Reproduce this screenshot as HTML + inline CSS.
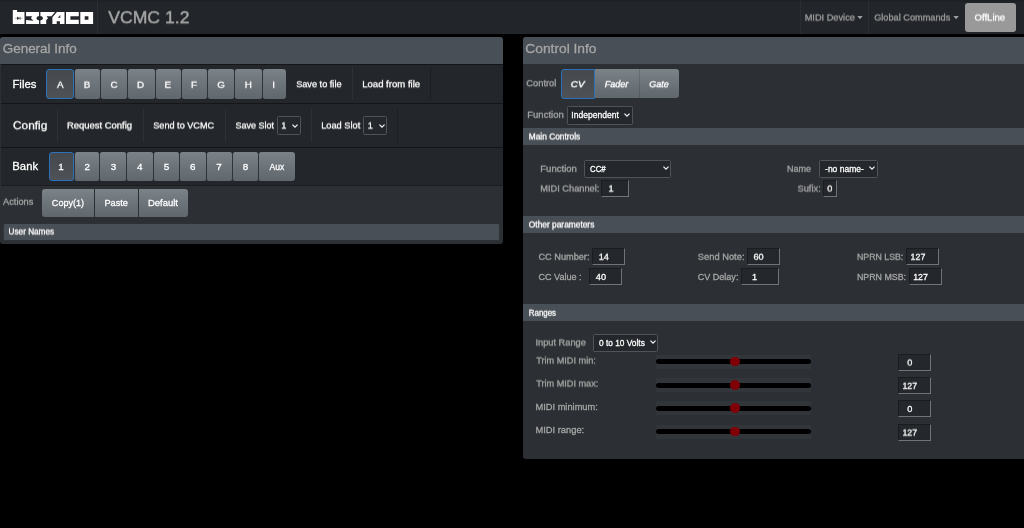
<!DOCTYPE html>
<html lang="en"><head><meta charset="utf-8"><title>VCMC 1.2</title>
<style>
html,body{margin:0;padding:0;background:#000;}
body{width:1024px;height:528px;overflow:hidden;position:relative;font-family:"Liberation Sans",sans-serif;}
.b{position:absolute;box-sizing:border-box;}
.tx{position:absolute;left:0;top:0;width:1024px;height:528px;will-change:transform;z-index:5;transform-origin:0 0;}
.t{position:absolute;-webkit-text-stroke:.28px;white-space:pre;line-height:1;transform-origin:0 0;font-family:"Liberation Sans",sans-serif;}

.btn{position:absolute;box-sizing:border-box;background:linear-gradient(#7b8288,#6b7278 55%,#60676d);border-radius:2.2px;}
.btn.first{border-radius:3px 2.2px 2.2px 3px;}
.btn.last{border-radius:2.2px 3px 3px 2.2px;}
.btn.act{background:linear-gradient(#45494e,#4a4e53 55%,#4e5257);border:1px solid #2c72b8;border-radius:3px;}
.sel{position:absolute;box-sizing:border-box;background:#24272b;border:1px solid #505357;border-radius:1.5px;}
.inp{position:absolute;box-sizing:border-box;background:#24272b;border:1px solid;border-color:#1a1c1f #70747a #70747a #1a1c1f;}
.bar{position:absolute;box-sizing:border-box;background:#484f56;}
.row{position:absolute;box-sizing:border-box;background:#23262a;border-top:1px solid #141619;}
.vs{position:absolute;width:1px;background:#2d3035;}
.vs.dk{background:#1c1e22;}
.trk{position:absolute;box-sizing:border-box;background:#32363a;}
.trk i{position:absolute;left:0;right:0;top:4.6px;height:5px;border-radius:2.5px;background:#000;}
.trk b{position:absolute;width:9.6px;height:9.6px;border-radius:50%;background:#800008;top:2.3px;left:74px;}
</style></head>
<body>
<div class="b " style="left:-8px;top:-8px;width:1040px;height:9px;background:#1c1f22;"></div>
<div class="b " style="left:-8px;top:0px;width:1040px;height:34px;background:linear-gradient(#1c1f22,#222529 3px,#222529);"></div>
<div class="b " style="left:97px;top:0px;width:1px;height:34px;background:#2a2d32;"></div>
<div class="b " style="left:800px;top:0px;width:1px;height:34px;background:#2a2d32;"></div>
<div class="b " style="left:868px;top:0px;width:1px;height:34px;background:#2a2d32;"></div>
<svg class="b" style="left:0;top:0;" width="100" height="34" viewBox="0 0 100 34"><g fill="#fff"><path d="M12.8 9.9H17.1V12H24.5V24H12.8Z"/><path d="M26.05 11.9H39.05V24H26.05V20.1L33.55 20.7L30.9 18.2L32.2 16.15H26.05Z"/><path d="M40.4 11.9H55L51.5 16.2H46.5L48 18.2L46.2 20.3V24H40.4Z"/><path fill-rule="evenodd" d="M56.9 11.9H64.5V24H59.9V21.3H56.7V24H52.4V17.3ZM60.3 15V17.8H57.8Z"/><path d="M66 11.9H78.8V16.3H70.4V19.8H78.8V24H66Z"/><path fill-rule="evenodd" d="M80.3 11.9H93.1V24H80.3ZM84.7 16.3H88.4V19.8H84.7Z"/></g><ellipse cx="39.7" cy="18.2" rx="3.1" ry="2.1" fill="#222529"/><g stroke="#777" stroke-width=".55" fill="#333"><path d="M14.9 18.3H22.5" fill="none"/><path d="M17 16.6V20L19.7 18.3Z" stroke="none"/><path d="M20.1 16.6V20" fill="none" stroke="#444" stroke-width=".7"/></g></svg>

<svg class="b" style="left:855px;top:14px" width="10" height="8" viewBox="855 14 10 8"><path d="M857.3 16.1H862.7L860 19.2Z" fill="#9e9e9e"/></svg>
<svg class="b" style="left:951px;top:14px" width="10" height="8" viewBox="951 14 10 8"><path d="M953.4 16.1H958.8L956.1 19.2Z" fill="#9e9e9e"/></svg>
<div class="b " style="left:965px;top:3px;width:50.5px;height:28.5px;background:#999;border-radius:3px;"></div>
<div class="b " style="left:0px;top:37px;width:503.1px;height:207px;background:#2c3034;border-radius:3px;"></div>
<div class="b " style="left:0px;top:37px;width:503.1px;height:27px;background:#484f56;border-radius:3px 3px 0 0;"></div>
<div class="b row" style="left:1px;top:64px;width:502.1px;height:39px;"></div>
<div class="b row" style="left:1px;top:103px;width:502.1px;height:44px;"></div>
<div class="b row" style="left:1px;top:147px;width:502.1px;height:38.3px;"></div>
<div class="b " style="left:1px;top:185.2px;width:502.1px;height:0.7px;background:#1b1d21;"></div>
<div class="b " style="left:60px;top:69.8px;width:220px;height:28.4px;background:#30343a;"></div>
<div class="btn act" style="left:46.4px;top:69px;width:27.6px;height:29.8px;"></div>
<div class="btn" style="left:75px;top:69.2px;width:25.0px;height:29.5px;"></div>
<div class="btn" style="left:101px;top:69.2px;width:26.0px;height:29.5px;"></div>
<div class="btn" style="left:128px;top:69.2px;width:27.0px;height:29.5px;"></div>
<div class="btn" style="left:156px;top:69.2px;width:25.0px;height:29.5px;"></div>
<div class="btn" style="left:182px;top:69.2px;width:25.0px;height:29.5px;"></div>
<div class="btn" style="left:208px;top:69.2px;width:26.0px;height:29.5px;"></div>
<div class="btn" style="left:235px;top:69.2px;width:27.0px;height:29.5px;"></div>
<div class="btn last" style="left:263px;top:69.2px;width:22.5px;height:29.5px;"></div>
<div class="b vs" style="left:352px;top:67.3px;width:1px;height:32.7px;"></div>
<div class="b vs dk" style="left:429.8px;top:67.3px;width:1px;height:32.7px;"></div>
<div class="b vs" style="left:57px;top:109px;width:1px;height:33px;"></div>
<div class="b vs" style="left:142.8px;top:109px;width:1px;height:33px;"></div>
<div class="b vs" style="left:225px;top:109px;width:1px;height:33px;"></div>
<div class="b vs" style="left:311px;top:109px;width:1px;height:33px;"></div>
<div class="b vs dk" style="left:397px;top:109px;width:1px;height:33px;"></div>
<div class="sel" style="left:277px;top:116px;width:24px;height:18.5px;"></div>
<svg class="b" style="z-index:2;left:291.20px;top:122.60px" width="8" height="6" viewBox="-4 -3 8 6"><path d="M-2.55 -1.35L0 1.2L2.55 -1.35" fill="none" stroke="#f4f4f4" stroke-width="1.25"/></svg>
<svg class="b" style="z-index:2;left:377.60px;top:122.60px" width="8" height="6" viewBox="-4 -3 8 6"><path d="M-2.55 -1.35L0 1.2L2.55 -1.35" fill="none" stroke="#f4f4f4" stroke-width="1.25"/></svg>
<div class="sel" style="left:363px;top:116px;width:24.1px;height:18.5px;"></div>
<div class="b " style="left:60px;top:152.7px;width:225px;height:27.9px;background:#30343a;"></div>
<div class="btn act" style="left:49.1px;top:152.1px;width:25.2px;height:29.1px;"></div>
<div class="btn" style="left:75px;top:152.1px;width:24.0px;height:29.1px;"></div>
<div class="btn" style="left:100px;top:152.1px;width:26.0px;height:29.1px;"></div>
<div class="btn" style="left:127px;top:152.1px;width:26.0px;height:29.1px;"></div>
<div class="btn" style="left:154px;top:152.1px;width:25.0px;height:29.1px;"></div>
<div class="btn" style="left:180px;top:152.1px;width:26.0px;height:29.1px;"></div>
<div class="btn" style="left:207px;top:152.1px;width:25.0px;height:29.1px;"></div>
<div class="btn" style="left:233px;top:152.1px;width:25.0px;height:29.1px;"></div>
<div class="btn last" style="left:259px;top:152.1px;width:36.3px;height:29.1px;"></div>
<div class="btn" style="left:41.6px;top:188.9px;width:52.8px;height:27.7px;border-radius:3px 0 0 3px;"></div>
<div class="btn" style="left:95.1px;top:188.9px;width:43.3px;height:27.7px;border-radius:0;"></div>
<div class="btn" style="left:139.1px;top:188.9px;width:49px;height:27.7px;border-radius:0 3px 3px 0;"></div>
<div class="b " style="left:2.7px;top:222.5px;width:497.8px;height:18.9px;background:#484f56;border-radius:2.5px;box-shadow:inset 0 0 0 .9px rgba(0,0,0,.36);"></div>
<div class="b " style="left:522.8px;top:37px;width:509px;height:421.7px;background:#2c3034;border-radius:3px 0 0 3px;"></div>
<div class="b " style="left:522.8px;top:37px;width:509px;height:27px;background:#484f56;border-radius:3px 0 0 0;"></div>
<div class="btn" style="left:595px;top:69.4px;width:43.7px;height:29.1px;border-radius:0;"></div>
<div class="btn" style="left:639.1px;top:69.4px;width:40px;height:29.1px;border-radius:0 3px 3px 0;"></div>
<div class="btn act" style="left:561.1px;top:69px;width:34.1px;height:29.6px;border-radius:3px 1px 1px 3px;"></div>
<div class="b " style="left:638.6px;top:69.4px;width:0.7px;height:29.1px;background:rgba(0,0,0,.13);"></div>
<div class="sel" style="left:567px;top:106.4px;width:65.8px;height:18.2px;"></div>
<svg class="b" style="z-index:2;left:622.90px;top:112.10px" width="8" height="6" viewBox="-4 -3 8 6"><path d="M-2.55 -1.35L0 1.2L2.55 -1.35" fill="none" stroke="#f4f4f4" stroke-width="1.25"/></svg>
<div class="b bar" style="left:522.8px;top:127.6px;width:509px;height:17.2px;"></div>
<div class="sel" style="left:584.3px;top:160.1px;width:86.6px;height:17.6px;"></div>
<svg class="b" style="z-index:2;left:661.50px;top:165.20px" width="8" height="6" viewBox="-4 -3 8 6"><path d="M-2.55 -1.35L0 1.2L2.55 -1.35" fill="none" stroke="#f4f4f4" stroke-width="1.25"/></svg>
<svg class="b" style="z-index:2;left:868.30px;top:165.20px" width="8" height="6" viewBox="-4 -3 8 6"><path d="M-2.55 -1.35L0 1.2L2.55 -1.35" fill="none" stroke="#f4f4f4" stroke-width="1.25"/></svg>
<div class="inp" style="left:601.4px;top:180.0px;width:27.7px;height:17.1px;"></div>
<div class="sel" style="left:819.2px;top:160px;width:58.4px;height:17.6px;"></div>
<div class="inp" style="left:822.9px;top:180.0px;width:13.9px;height:17.1px;"></div>
<div class="b bar" style="left:522.8px;top:215.8px;width:509px;height:17.2px;"></div>
<div class="inp" style="left:591.9px;top:247.7px;width:32.9px;height:16.9px;"></div>
<div class="inp" style="left:588.7px;top:268.0px;width:32.9px;height:17.0px;"></div>
<div class="inp" style="left:746.9px;top:247.7px;width:32.9px;height:16.9px;"></div>
<div class="inp" style="left:740.7px;top:268.0px;width:37.9px;height:17.0px;"></div>
<div class="inp" style="left:906.1px;top:247.7px;width:33.1px;height:16.9px;"></div>
<div class="inp" style="left:908.7px;top:268.0px;width:33.1px;height:17.0px;"></div>
<div class="b bar" style="left:522.8px;top:304px;width:509px;height:17.1px;"></div>
<div class="sel" style="left:593.2px;top:334px;width:64.8px;height:17.6px;"></div>
<svg class="b" style="z-index:2;left:648.90px;top:339.20px" width="8" height="6" viewBox="-4 -3 8 6"><path d="M-2.55 -1.35L0 1.2L2.55 -1.35" fill="none" stroke="#f4f4f4" stroke-width="1.25"/></svg>
<div class="trk" style="left:656px;top:354.6px;width:155px;height:14.3px;"><i></i><b></b></div>
<div class="inp" style="left:898px;top:353.5px;width:33.2px;height:17px;"></div>
<div class="trk" style="left:656px;top:378px;width:155px;height:14.3px;"><i></i><b></b></div>
<div class="inp" style="left:898px;top:376.8px;width:33.2px;height:17px;"></div>
<div class="trk" style="left:656px;top:401.2px;width:155px;height:14.3px;"><i></i><b></b></div>
<div class="inp" style="left:898px;top:400.0px;width:33.2px;height:17px;"></div>
<div class="trk" style="left:656px;top:424.5px;width:155px;height:14.3px;"><i></i><b></b></div>
<div class="inp" style="left:898px;top:423.5px;width:33.2px;height:17px;"></div>
<div class="tx">
<span class="t" style="left:2.00px;top:42.02px;font-size:13.4px;color:#a6a6a6;transform:translateX(0.71px) scaleX(1.0044);">General Info</span>
<span class="t" style="left:12.00px;top:78.02px;font-size:11.7px;color:#ffffff;transform:translateX(0.43px) scaleX(0.9717);">Files</span>
<span class="t" style="left:12.00px;top:160.02px;font-size:11.7px;color:#ffffff;transform:translateX(0.34px) scaleX(0.9647);">Bank</span>
<span class="t" style="left:58.34px;top:162.02px;font-size:9.9px;color:#ffffff;">1</span>
<span class="t" style="left:84.40px;top:162.02px;font-size:9.9px;color:#ffffff;">2</span>
<span class="t" style="left:110.64px;top:162.02px;font-size:9.9px;color:#ffffff;">3</span>
<span class="t" style="left:137.01px;top:162.02px;font-size:9.9px;color:#ffffff;">4</span>
<span class="t" style="left:163.68px;top:162.02px;font-size:9.9px;color:#ffffff;">5</span>
<span class="t" style="left:190.05px;top:162.02px;font-size:9.9px;color:#ffffff;">6</span>
<span class="t" style="left:216.33px;top:162.02px;font-size:9.9px;color:#ffffff;">7</span>
<span class="t" style="left:242.65px;top:162.02px;font-size:9.9px;color:#ffffff;">8</span>
<span class="t" style="left:269.00px;top:162.02px;font-size:9.9px;color:#ffffff;transform:translateX(0.61px) scaleX(0.8659);">Aux</span>
<span class="t" style="left:51.00px;top:198.02px;font-size:9.9px;color:#ffffff;transform:translateX(0.83px) scaleX(0.9185);">Copy(1)</span>
<span class="t" style="left:104.00px;top:198.02px;font-size:9.9px;color:#ffffff;transform:translateX(0.39px) scaleX(0.9336);">Paste</span>
<span class="t" style="left:147.00px;top:198.02px;font-size:9.9px;color:#ffffff;transform:translateX(0.88px) scaleX(0.9598);">Default</span>
<span class="t" style="left:525.00px;top:42.02px;font-size:13.4px;color:#a6a6a6;transform:translateX(0.28px) scaleX(1.0292);">Control Info</span>
<span class="t" style="left:571.00px;top:111.02px;font-size:8.9px;color:#ffffff;transform:translateX(0.26px) scaleX(0.9622);">Independent</span>
<span class="t" style="left:590.00px;top:165.02px;font-size:8.9px;color:#ffffff;transform:translateX(0.03px) scaleX(0.8837);">CC#</span>
<span class="t" style="left:825.00px;top:165.02px;font-size:8.9px;color:#ffffff;transform:translateX(0.05px) scaleX(0.9588);">-no name-</span>
<span class="t" style="left:538.00px;top:272.02px;font-size:9.4px;color:#a6a6a6;transform:translateX(0.43px) scaleX(0.9679);">CC Value :</span>
<span class="t" style="left:595.78px;top:273.02px;font-size:9.2px;color:#ffffff;">40</span>
<span class="t" style="left:697.00px;top:272.02px;font-size:9.4px;color:#a6a6a6;transform:translateX(0.83px) scaleX(0.9609);">CV Delay:</span>
<span class="t" style="left:751.98px;top:273.02px;font-size:9.2px;color:#ffffff;">1</span>
<span class="t" style="left:856.00px;top:272.02px;font-size:9.4px;color:#a6a6a6;transform:translateX(0.92px) scaleX(0.9437);">NPRN MSB:</span>
<span class="t" style="left:913.00px;top:273.02px;font-size:9.2px;color:#ffffff;transform:translateX(0.20px) scaleX(0.9612);">127</span>
<span class="t" style="left:599.00px;top:339.02px;font-size:8.9px;color:#ffffff;transform:translateX(0.06px) scaleX(0.9361);">0 to 10 Volts</span>
<span class="t" style="left:535.00px;top:402.02px;font-size:9.4px;color:#a6a6a6;transform:translateX(0.49px) scaleX(0.9890);">MIDI minimum:</span>
<span class="t" style="left:907.15px;top:405.02px;font-size:9.2px;color:#ffffff;">0</span>
<span class="t" style="left:535.00px;top:425.02px;font-size:9.4px;color:#a6a6a6;transform:translateX(0.49px) scaleX(0.9939);">MIDI range:</span>
</div>
<div class="tx" style="transform:translate3d(0,0.25px,0) rotate(.003deg)">
<span class="t" style="left:108.00px;top:9.02px;font-size:17.4px;color:#a6a6a6;-webkit-text-stroke:0.4px;transform:translateX(0.17px) scaleX(1.0138);">VCMC 1.2</span>
<span class="t" style="left:296.00px;top:79.02px;font-size:9.9px;color:#ffffff;transform:translateX(0.13px) scaleX(0.9299);">Save to file</span>
<span class="t" style="left:362.00px;top:79.02px;font-size:9.9px;color:#ffffff;transform:translateX(0.18px) scaleX(0.9686);">Load from file</span>
<span class="t" style="left:13.00px;top:119.02px;font-size:11.7px;color:#ffffff;transform:translateX(0.01px) scaleX(1.0122);">Config</span>
<span class="t" style="left:526.00px;top:78.02px;font-size:9.4px;color:#a6a6a6;transform:translateX(0.34px) scaleX(0.9936);">Control</span>
<span class="t" style="left:570.80px;top:79.02px;font-size:9.9px;color:#ffffff;font-style:italic;-webkit-text-stroke:0.36px;">CV</span>
<span class="t" style="left:604.00px;top:79.02px;font-size:9.9px;color:#ffffff;font-style:italic;-webkit-text-stroke:0.36px;transform:translateX(0.77px) scaleX(0.9099);">Fader</span>
<span class="t" style="left:649.00px;top:79.02px;font-size:9.9px;color:#ffffff;font-style:italic;-webkit-text-stroke:0.36px;transform:translateX(0.23px) scaleX(0.9071);">Gate</span>
</div>
<div class="tx" style="transform:translate3d(0,0.5px,0) rotate(.003deg)">
<span class="t" style="left:804.00px;top:12.02px;font-size:9.4px;color:#9e9e9e;transform:translateX(0.69px) scaleX(0.9831);">MIDI Device</span>
<span class="t" style="left:874.00px;top:12.02px;font-size:9.4px;color:#9e9e9e;transform:translateX(0.13px) scaleX(0.9801);">Global Commands</span>
<span class="t" style="left:974.00px;top:12.02px;font-size:9.9px;color:#ffffff;transform:translateX(0.53px) scaleX(0.9674);">OffLine</span>
<span class="t" style="left:66.00px;top:120.02px;font-size:9.9px;color:#ffffff;transform:translateX(0.98px) scaleX(0.9557);">Request Config</span>
<span class="t" style="left:153.00px;top:120.02px;font-size:9.9px;color:#ffffff;transform:translateX(0.23px) scaleX(0.9249);">Send to VCMC</span>
<span class="t" style="left:235.00px;top:120.02px;font-size:9.9px;color:#ffffff;transform:translateX(0.53px) scaleX(0.9102);">Save Slot</span>
<span class="t" style="left:281.28px;top:121.02px;font-size:9.2px;color:#ffffff;">1</span>
<span class="t" style="left:321.00px;top:120.02px;font-size:9.9px;color:#ffffff;transform:translateX(0.19px) scaleX(0.9352);">Load Slot</span>
<span class="t" style="left:367.68px;top:121.02px;font-size:9.2px;color:#ffffff;">1</span>
<span class="t" style="left:8.00px;top:227.02px;font-size:8.5px;color:#ffffff;transform:translateX(0.61px) scaleX(0.9614);">User Names</span>
<span class="t" style="left:528.00px;top:132.02px;font-size:8.4px;color:#ffffff;transform:translateX(0.81px) scaleX(0.9935);">Main Controls</span>
<span class="t" style="left:540.00px;top:183.02px;font-size:9.4px;color:#a6a6a6;transform:translateX(0.29px) scaleX(0.9849);">MIDI Channel:</span>
<span class="t" style="left:608.38px;top:184.02px;font-size:9.2px;color:#ffffff;">1</span>
<span class="t" style="left:797.00px;top:183.02px;font-size:9.4px;color:#a6a6a6;transform:translateX(0.43px) scaleX(0.9956);">Sufix:</span>
<span class="t" style="left:827.25px;top:184.02px;font-size:9.2px;color:#ffffff;">0</span>
<span class="t" style="left:528.00px;top:220.02px;font-size:8.4px;color:#ffffff;transform:translateX(0.84px) scaleX(0.9975);">Other parameters</span>
<span class="t" style="left:535.00px;top:337.02px;font-size:9.4px;color:#a6a6a6;transform:translateX(0.41px) scaleX(0.9887);">Input Range</span>
<span class="t" style="left:536.00px;top:355.02px;font-size:9.4px;color:#a6a6a6;transform:translateX(0.13px) scaleX(0.9781);">Trim MIDI min:</span>
<span class="t" style="left:907.15px;top:358.02px;font-size:9.2px;color:#ffffff;">0</span>
<span class="t" style="left:536.00px;top:378.02px;font-size:9.4px;color:#a6a6a6;transform:translateX(0.13px) scaleX(0.9761);">Trim MIDI max:</span>
<span class="t" style="left:902.00px;top:428.02px;font-size:9.2px;color:#ffffff;transform:translateX(0.40px) scaleX(0.9612);">127</span>
</div>
<div class="tx" style="transform:translate3d(0,0.75px,0) rotate(.003deg)">
<span class="t" style="left:56.95px;top:79.02px;font-size:9.9px;color:#ffffff;">A</span>
<span class="t" style="left:83.66px;top:79.02px;font-size:9.9px;color:#ffffff;">B</span>
<span class="t" style="left:110.46px;top:79.02px;font-size:9.9px;color:#ffffff;">C</span>
<span class="t" style="left:137.07px;top:79.02px;font-size:9.9px;color:#ffffff;">D</span>
<span class="t" style="left:164.45px;top:79.02px;font-size:9.9px;color:#ffffff;">E</span>
<span class="t" style="left:190.92px;top:79.02px;font-size:9.9px;color:#ffffff;">F</span>
<span class="t" style="left:217.21px;top:79.02px;font-size:9.9px;color:#ffffff;">G</span>
<span class="t" style="left:244.82px;top:79.02px;font-size:9.9px;color:#ffffff;">H</span>
<span class="t" style="left:272.30px;top:79.02px;font-size:9.9px;color:#ffffff;">I</span>
<span class="t" style="left:3.00px;top:196.02px;font-size:9.4px;color:#a6a6a6;transform:translateX(0.03px) scaleX(0.9856);">Actions</span>
<span class="t" style="left:527.00px;top:109.02px;font-size:9.4px;color:#a6a6a6;transform:translateX(0.26px) scaleX(1.0141);">Function</span>
<span class="t" style="left:540.00px;top:163.02px;font-size:9.4px;color:#a6a6a6;transform:translateX(0.26px) scaleX(1.0198);">Function</span>
<span class="t" style="left:787.00px;top:163.02px;font-size:9.4px;color:#a6a6a6;transform:translateX(0.02px) scaleX(0.9567);">Name</span>
<span class="t" style="left:538.00px;top:251.02px;font-size:9.4px;color:#a6a6a6;transform:translateX(0.43px) scaleX(0.9800);">CC Number:</span>
<span class="t" style="left:598.73px;top:252.02px;font-size:9.2px;color:#ffffff;">14</span>
<span class="t" style="left:697.00px;top:251.02px;font-size:9.4px;color:#a6a6a6;transform:translateX(0.83px) scaleX(0.9948);">Send Note:</span>
<span class="t" style="left:753.44px;top:252.02px;font-size:9.2px;color:#ffffff;">60</span>
<span class="t" style="left:856.00px;top:251.02px;font-size:9.4px;color:#a6a6a6;transform:translateX(0.93px) scaleX(0.9368);">NPRN LSB:</span>
<span class="t" style="left:910.00px;top:252.02px;font-size:9.2px;color:#ffffff;transform:translateX(0.60px) scaleX(0.9612);">127</span>
<span class="t" style="left:528.00px;top:308.02px;font-size:8.4px;color:#ffffff;transform:translateX(0.81px) scaleX(0.9443);">Ranges</span>
<span class="t" style="left:902.00px;top:381.02px;font-size:9.2px;color:#ffffff;transform:translateX(0.40px) scaleX(0.9612);">127</span>
</div>
</body></html>
